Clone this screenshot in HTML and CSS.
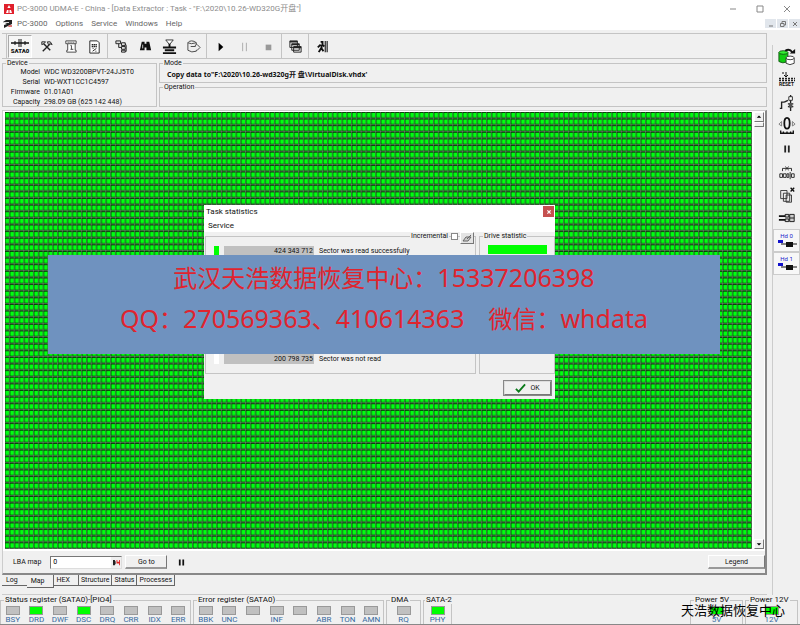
FILE: index.html
```html
<!DOCTYPE html>
<html lang="en">
<head>
<meta charset="utf-8">
<title>PC-3000 UDMA-E</title>
<link rel="stylesheet" href="styles.css">
</head>
<body>
<div class="window">
  <header class="titlebar">
    <svg class="app-icon" viewBox="0 0 10 10"><rect width="10" height="10" fill="#e0202c"/><path d="M5 1 3.400 4h3.200zM2 9l1-3h1.500v3zM8 9 7 6H5.500v3z" fill="#fff"/></svg>
    <h1>PC-3000 UDMA-E - China - [Data Extractor : Task - "F:\2020\10.26-WD320G开盘"]</h1>
    <div class="caption">
      <button aria-label="Minimize"><svg viewBox="0 0 8 8"><path d="M1 4h6"/></svg></button>
      <button aria-label="Maximize"><svg viewBox="0 0 8 8"><path d="M1 1h6v6H1z"/></svg></button>
      <button aria-label="Close"><svg viewBox="0 0 8 8"><path d="m1 1 6 6M7 1 1 7"/></svg></button>
    </div>
  </header>
  <nav class="menubar">
    <svg class="doc-icon" viewBox="0 0 10 10"><path d="M0 3 3 1h6v4L5 7 1 9V6l3-1z" fill="#222"/><path d="M1 3h5v1H1z" fill="#ddd"/><path d="M6 6h3v2H5z" fill="#d77"/></svg>
    <button>PC-3000</button><button>Options</button><button>Service</button><button>Windows</button><button>Help</button>
    <div class="mdi">
      <button aria-label="Minimize document"><svg viewBox="0 0 8 8"><path d="M2 6h4"/></svg></button>
      <button aria-label="Restore document"><svg viewBox="0 0 8 8"><path d="M3 3V1.500h3.500V5H5M1.500 3.500H5v3H1.500z"/></svg></button>
      <button aria-label="Close document"><svg viewBox="0 0 8 8"><path d="m2 2 4 4M6 2 2 6"/></svg></button>
    </div>
  </nav>

  <div class="workspace">
    <main class="main">
      <div class="toolbar">
        <div class="group first">
          <button class="sata"><svg viewBox="0 0 18 8"><path d="M0 4h18" stroke="#111" stroke-width="1.500"/><path d="M4 2v4M14 2v4M8 0v8M10 0v8" stroke="#111"/></svg>SATA0</button>
          <button aria-label="Tools"><svg viewBox="0 0 16 16"><path d="m4 4 8 8M12 5l-8 8" stroke="#222" stroke-width="1.500"/><path d="M3 6V3h4L5 5zM9 3h3l2 3-2-1-2 1z" fill="#ddd" stroke="#222"/></svg></button>
          <button aria-label="Script"><svg viewBox="0 0 16 16"><path d="M3 2h11v3h-1v7h1v2H4v-2h1V5H3zM5 5h8M9 7v4M8 11h3M8 7h1" fill="#fff" stroke="#444"/><path d="M5 3.500h8" stroke="#333" stroke-dasharray="1"/></svg></button>
          <button aria-label="Report"><svg viewBox="0 0 16 16"><path d="M3 2h8l2 2v11H3z" fill="#fff" stroke="#222"/><path d="M5 6h6M5 8h6" stroke="#222" stroke-width="1.500" stroke-dasharray="1.500 .5"/><path d="m6 13 4-3M6 10h1M9 13h1" stroke="#222"/></svg></button>
        </div>
        <div class="group">
          <button aria-label="Structure tree"><svg viewBox="0 0 16 16"><path d="M2 2h5v3H2zM8 4h4v3H8zM8 8h4v3H8zM8 12h4v2H8zM5 5v4h3M12 5l1 2v6l-1 1" fill="#ddd" stroke="#222"/></svg></button>
          <button aria-label="Find"><svg viewBox="0 0 16 16"><path d="M4 3h3v2h2V3h3l2 9H9V9H7v3H2z" fill="#111"/><path d="M5 6v4" stroke="#ccc"/></svg></button>
          <button aria-label="Map builder"><svg viewBox="0 0 16 16"><path d="M4 1h8L8 6z" fill="#fff" stroke="#333"/><path d="M8 5v3M1 9h14M3 12h10M1 15h14" stroke="#111" stroke-width="2"/></svg></button>
          <button aria-label="Open"><svg viewBox="0 0 16 16"><path d="M2 12V4q1-2 4-2t5 2v2h1l3 3-3 3h-1v1q-5 2-9-1M2 4q3 2 9 0M5 8h5V6" fill="#eee" stroke="#444"/></svg></button>
        </div>
        <div class="group">
          <button aria-label="Start"><svg viewBox="0 0 16 16"><path d="m6 4 5 4.500L6 13z" fill="#000"/></svg></button>
          <button aria-label="Pause"><svg viewBox="0 0 16 16"><path d="M6 4v9M10 4v9" stroke="#aaa"/></svg></button>
          <button aria-label="Stop"><svg viewBox="0 0 16 16"><path d="M5 6h6v6H5z" fill="#999"/></svg></button>
        </div>
        <div class="group">
          <button aria-label="Windows"><svg viewBox="0 0 16 16"><path d="M2 2h8v7H2zM4 5h8v7H4zM6 8h8v6H6z" fill="#eee" stroke="#222"/><path d="M2 3h8M4 6h8M6 9h8" stroke="#222" stroke-width="1.500"/></svg></button>
        </div>
        <div class="group">
          <button aria-label="Exit"><svg viewBox="0 0 16 16"><path d="M6 3h2v3l2 2M7 6v4l2 3M7 9l-3 5M6 6 3 9" stroke="#111" stroke-width="2" fill="none"/><path d="M11 2v12M13 2v12" stroke="#444" stroke-width="1.500"/></svg></button>
        </div>
      </div>

      <div class="info">
        <fieldset class="device">
          <legend>Device</legend>
          <dl>
            <dt>Model</dt><dd>WDC WD3200BPVT-24JJ5T0</dd>
            <dt>Serial</dt><dd>WD-WXT1CC1C4597</dd>
            <dt>Firmware</dt><dd>01.01A01</dd>
            <dt>Capacity</dt><dd>298.09 GB (625 142 448)</dd>
          </dl>
        </fieldset>
        <div class="modes">
          <fieldset><legend>Mode</legend><p>Copy data to"F:\2020\10.26-wd320g开 盘\VirtualDisk.vhdx'</p></fieldset>
          <fieldset><legend>Operation</legend></fieldset>
        </div>
      </div>

      <section class="map-panel">
        <div class="map-row">
          <svg class="map" viewBox="0 0 1860 1056" preserveAspectRatio="none">
            <defs><pattern id="cell" width="12" height="16" patternUnits="userSpaceOnUse">
              <rect width="12" height="16" fill="#9aa09a"/><rect width="11" height="15" fill="#033003"/><rect x="1" y="2" width="9" height="11" fill="#0f1"/>
            </pattern></defs>
            <rect width="1860" height="1056" fill="url(#cell)"/>
          </svg>
          <div class="scrollbar">
            <button aria-label="Scroll up"><svg viewBox="0 0 8 8"><path d="m1 5 3-3 3 3z"/></svg></button>
            <span class="thumb"></span>
            <button class="down" aria-label="Scroll down"><svg viewBox="0 0 8 8"><path d="m1 3 3 3 3-3z"/></svg></button>
          </div>
        </div>
        <div class="map-tools">
          <label for="lba">LBA map</label>
          <div class="lba"><input id="lba" value="0"><button aria-label="Number base"><svg viewBox="0 0 8 8"><path d="M0 1h2l1 2v2L2 7H0z" fill="#222"/><path d="M4 1h1v2h2V1h1v6H7V5H4z" fill="#d22"/></svg></button></div>
          <button class="raised goto">Go to</button>
          <button class="pause" aria-label="Pause map"><svg viewBox="0 0 8 8"><path d="M2 1v7M6 1v7" stroke="#111" stroke-width="2"/></svg></button>
          <button class="raised legend-btn">Legend</button>
        </div>
      </section>
      <nav class="tabs">
        <button>Log</button><button class="active">Map</button><button>HEX</button><button>Structure</button><button>Status</button><button>Processes</button>
      </nav>
    </main>

    <aside class="side">
      <button aria-label="Drive power"><svg viewBox="0 0 20 20"><path d="M1 5v10q4 3 10 0V5" fill="#1c1" stroke="#151"/><ellipse cx="6" cy="5" rx="5" ry="2" fill="#3e3" stroke="#151"/><path d="M9 11v6q4 3 9 0v-6" fill="#fff" stroke="#333"/><ellipse cx="13.500" cy="11" rx="4.500" ry="2" fill="#fff" stroke="#333"/><path d="M8 3q5-3 8 2" fill="none" stroke="#111" stroke-width="2"/><path d="M13 6h6V1z" fill="#111"/></svg></button>
      <button class="reset"><svg viewBox="0 0 18 10"><path d="M5 0v2M8 0v4M6 3l2 2 2-2" stroke="#111" fill="none"/><path d="M1 6.500h16M1 8.500h16" stroke="#222" stroke-width="1.500" stroke-dasharray="2 1"/></svg>RESET</button>
      <button aria-label="Probe"><svg viewBox="0 0 20 20"><path d="M2 16h2V9h3M7 9l4-2M14 1v18M11 11h6M11 14h6" stroke="#222" fill="none" stroke-width="1.500"/><path d="M12 3h4v4h-4z" fill="#fff" stroke="#222"/><path d="M12 10h4v5h-4z" fill="#555"/></svg></button>
      <button aria-label="Recalibrate"><svg viewBox="0 0 20 20"><ellipse cx="10" cy="7" rx="3" ry="6" fill="none" stroke="#111" stroke-width="2"/><path d="M4 5 1 8l3 2zM16 5l3 3-3 2z" fill="none" stroke="#777"/><path d="M3 15v3h14v-3M6 16v2M10 16v2M14 16v2" fill="none" stroke="#111" stroke-width="1.500"/></svg></button>
      <button aria-label="Pause drive"><svg viewBox="0 0 20 20"><path d="M8 6v8M12 6v8" stroke="#222" stroke-width="2"/></svg></button>
      <button aria-label="Sector mode"><svg viewBox="0 0 20 20"><path d="M2 12h3v4H2zM6 12h3v4H6zM10 12h2v4h-2zM15 12h3v4h-3zM13.500 10v8M5 9V6h10v3M8 4l4 4M12 4 8 8" fill="none" stroke="#222"/></svg></button>
      <button aria-label="Copy"><svg viewBox="0 0 20 20"><path d="M3 5h7v9H3zM6 8h7v9H6zM9 10h6v8H9z" fill="#eee" stroke="#333"/><path d="m14 2 4 4M18 2l-4 4" stroke="#111" stroke-width="1.500"/></svg></button>
      <button aria-label="Connector"><svg viewBox="0 0 20 20"><path d="M1 8h10M1 12h10" stroke="#111" stroke-width="2"/><path d="M8 6h4v3H8zM8 11h4v3H8zM13 6h5v8h-5zM13 10h5" fill="#ccc" stroke="#111"/></svg></button>
      <button class="hd">Hd 0<svg viewBox="0 0 20 10"><path d="M1 1h5v3H1z" fill="#11c"/><path d="M4 5h16" stroke="#111"/><path d="M9 3h7v5H9z" fill="#111"/></svg></button>
      <button class="hd">Hd 1<svg viewBox="0 0 20 10"><path d="M1 1h5v3H1z" fill="#11c"/><path d="M4 5h16" stroke="#111"/><path d="M9 3h7v5H9z" fill="#111"/></svg></button>
    </aside>
  </div>

  <footer class="status">
    <fieldset><legend>Status register (SATA0)-[PIO4]</legend>
      <ul><li>BSY</li><li class="on">DRD</li><li>DWF</li><li class="on">DSC</li><li>DRQ</li><li>CRR</li><li>IDX</li><li>ERR</li></ul></fieldset>
    <fieldset><legend>Error register (SATA0)</legend>
      <ul><li>BBK</li><li>UNC</li><li></li><li>INF</li><li></li><li>ABR</li><li>TON</li><li>AMN</li></ul></fieldset>
    <fieldset class="dma"><legend>DMA</legend><ul><li>RQ</li></ul></fieldset>
    <fieldset class="phy"><legend>SATA-2</legend><ul><li class="on">PHY</li></ul></fieldset>
    <fieldset class="power"><legend>Power 5V</legend><ul><li class="on">5V</li></ul></fieldset>
    <fieldset class="power last"><legend>Power 12V</legend><ul><li class="on">12V</li></ul></fieldset>
  </footer>

  <section class="dialog" role="dialog" aria-label="Task statistics">
    <header><h2>Task statistics</h2><button class="close" aria-label="Close dialog"><svg viewBox="0 0 10 10"><path d="m3 3 4 4M7 3 3 7" stroke="#fff" stroke-width="1.500"/></svg></button></header>
    <div class="dialog-menu"><button>Service</button></div>
    <div class="stats">
      <div class="box sectors">
        <div class="incremental"><label for="inc">Incremental</label><input type="checkbox" id="inc"><button aria-label="Clear"><svg viewBox="0 0 12 10"><path d="m2 8 3-4h5L7 8zM6 6l4-4" fill="#ccc" stroke="#666"/></svg></button></div>
        <div class="stat good"><i></i><b>424 343 712</b><span>Sector was read successfully</span></div>
        <div class="stat unread"><i></i><b>200 798 735</b><span>Sector was not read</span></div>
      </div>
      <fieldset class="drive"><legend>Drive statistic</legend><div class="bar"></div></fieldset>
    </div>
    <footer><button class="ok"><svg viewBox="0 0 12 10"><path d="m1 6 3 3 7-8" fill="none" stroke="#0a7a1a" stroke-width="2"/></svg>OK</button></footer>
  </section>

  <div class="banner">
    <p>武汉天浩数据恢复中心：<span>15337206398</span></p>
    <p><span>QQ</span>：<span>270569363</span>、<span>410614363</span><span class="gap"></span>微信：<span>whdata</span></p>
  </div>
  <div class="watermark">天浩数据恢复中心</div>
</div>
</body>
</html>
```
FILE: styles.css
```css
* { box-sizing: border-box; }
body {
  margin: 0;
  background: #f0f0f0;
  color: #111;
  font: 7px/8px Roboto, "Noto Sans CJK SC", sans-serif;
}
button {
  display: flex;
  align-items: center;
  justify-content: center;
  margin: 0;
  padding: 0;
  border: 0;
  background: none;
  color: inherit;
  font: inherit;
}
svg { display: block; }
h1, h2, p, ul, dl, dd { margin: 0; padding: 0; font-weight: normal; }
fieldset {
  min-width: 0;
  margin: 0;
  padding: 0;
  border: 1px solid #c4c4c4;
}
legend { margin-left: 3px; padding: 0 1px; line-height: 8px; }

.window {
  position: relative;
  display: flex;
  flex-direction: column;
  min-height: 100vh;
  overflow: hidden;
}

/* Title and menu */
.titlebar, .menubar {
  display: flex;
  align-items: center;
  background: #fff;
  color: #666;
}
.titlebar { height: 17px; padding-left: 4px; color: #8c8c8c; }
.titlebar h1 { margin-left: 3px; font-size: 8px; line-height: 16px; white-space: nowrap; }
.app-icon, .doc-icon { width: 10px; height: 10px; }
.caption { display: flex; margin-left: auto; }
.caption button { width: 27px; height: 16px; }
.caption svg { width: 8px; height: 8px; fill: none; stroke: #888; }
.menubar { height: 13px; padding-left: 3px; }
.menubar > button { margin: 0 4px; font-size: 8px; line-height: 12px; }
.mdi { display: flex; margin-left: auto; gap: 1px; }
.mdi button { width: 11px; height: 9px; background: #e1e6ec; }
.mdi svg { width: 8px; height: 8px; fill: none; stroke: #777; }

.workspace { display: flex; flex: 1; }
.main { display: flex; flex: 1; flex-direction: column; min-width: 0; padding: 3px 5px 0 2px; }

/* Toolbar */
.toolbar {
  display: flex;
  height: 26px;
  border: 1px solid #c4c4c4;
  border-left: 0;
}
.group { display: flex; align-items: center; padding: 0 1px; border-right: 1px solid #c4c4c4; }
.group:last-child { border-right: 0; }
.group.first { margin-left: 4px; border-left: 1px solid #c4c4c4; }
.group button { width: 24px; height: 23px; }
.group svg { width: 15px; height: 15px; }
.group .sata {
  flex-direction: column;
  margin-right: 2px;
  border: 1px solid #aaa;
  border-right-color: #fff;
  border-bottom-color: #fff;
  background: #f6f6f6;
  font-size: 6px;
  font-weight: 900;
  line-height: 7px;
}
.group .sata svg { width: 18px; height: 8px; }

/* Device and mode */
.info { display: flex; gap: 2px; height: 48px; }
.device { width: 155px; }
.device dl { display: grid; grid-template-columns: 37px 1fr; column-gap: 4px; line-height: 10px; white-space: nowrap; }
.device dt { text-align: right; }
.modes { display: grid; flex: 1; grid-template-rows: 24px 24px; }
.modes p { padding-left: 7px; font-family: "Noto Sans", "Noto Sans CJK SC", sans-serif; font-weight: bold; line-height: 16px; }

/* Sector map */
.map-panel {
  display: flex;
  flex: 1;
  flex-direction: column;
  margin-top: 3px;
  border: 1px solid #ccc;
  border-right: 2px solid #888;
  border-bottom: 2px solid #888;
}
.map-row { display: flex; flex: 1; min-height: 0; gap: 2px; padding: 1px 1px 2px 2px; background: #fff; }
.map { flex: 1; width: 0; height: 437px; }
.scrollbar { display: flex; flex-direction: column; width: 10px; background: #f4f4f4; }
.scrollbar button, .thumb {
  width: 10px;
  height: 10px;
  border: 1px solid #fff;
  border-right-color: #777;
  border-bottom-color: #777;
  background: #f0f0f0;
}
.thumb { height: 5px; }
.scrollbar .down { margin-top: auto; }
.scrollbar svg { width: 6px; height: 6px; }
.map-tools { display: flex; align-items: center; height: 22px; padding-left: 10px; }
.lba {
  display: flex;
  width: 72px;
  height: 13px;
  margin: 0 3px 0 9px;
  border: 1px solid #777;
  border-right-color: #ddd;
  border-bottom-color: #ddd;
  background: #fff;
}
.lba input { flex: 1; width: 0; padding: 0 2px; border: 0; background: none; font: inherit; }
.lba button { width: 10px; background: #f0f0f0; }
.lba svg { width: 7px; height: 7px; }
.raised {
  height: 14px;
  border: 1px solid #fff;
  border-right-color: #777;
  border-bottom: 2px solid #999;
}
.goto { width: 42px; }
.pause { width: 28px; }
.pause svg { width: 7px; height: 8px; }
.legend-btn { width: 57px; margin-left: auto; }

.tabs { display: flex; height: 20px; padding-bottom: 7px; border-bottom: 1px solid #ccc; }
.tabs button {
  height: 11px;
  padding: 0 2px;
  border-right: 1px solid #666;
  border-bottom: 1px solid #666;
}
.tabs button:first-child { padding: 0 9px 0 4px; border-right: 0; }
.tabs .active { height: 13px; padding: 0 8px 0 4px; }
.tabs button:nth-child(3) { padding: 0 8px 0 3px; }

/* Side tools */
.side {
  width: 28px;
  margin-top: 15px;
  border-left: 1px solid #ccc;
}
.side button { width: 27px; height: 23px; }
.side svg { width: 18px; height: 18px; }
.side .reset { flex-direction: column; font-size: 5px; font-weight: bold; line-height: 5px; }
.side .reset svg { height: 10px; }
.side .hd {
  flex-direction: column;
  border: 1px solid #ccc;
  background: #f7f7f7;
  color: #22c;
  font-size: 6px;
  line-height: 7px;
}
.side .hd svg { width: 20px; height: 10px; }

/* Registers */
.status {
  display: flex;
  gap: 2px;
  height: 30px;
  padding: 1px 2px 0 0;
  border-bottom: 1px solid #888;
  font-size: 8px;
}
.status fieldset { width: 191px; border-bottom: 0; }
.status legend { white-space: nowrap; }
.status ul { display: flex; list-style: none; }
.status li { display: flex; flex: 1; flex-direction: column; align-items: center; color: #36699f; line-height: 9px; }
.status li::before {
  width: 12px;
  height: 7px;
  margin-top: 2px;
  border: 1px solid #999;
  background: #c0c0c0;
  content: "";
}
.status .on::before { background: #0f0; }
.status .dma { width: 35px; }
.status .phy { width: 29px; }
.status .phy legend { margin-left: 1px; }
.status .power { width: 53px; margin-left: auto; }
.status .last { margin-left: 0; }

/* Statistics dialog */
.dialog {
  position: absolute;
  top: 205px;
  left: 204px;
  display: flex;
  flex-direction: column;
  width: 351px;
  height: 194px;
  background: #f0f0f0;
}
.dialog header, .dialog-menu { background: #fff; font-size: 8px; }
.dialog header { display: flex; justify-content: space-between; height: 14px; }
.dialog h2 { padding-left: 2px; font-size: 8px; line-height: 14px; }
.close { width: 11px; height: 11px; margin: 1px; background: #c5504f; }
.close svg { width: 8px; height: 8px; }
.dialog-menu { height: 13px; padding-left: 4px; }
.dialog-menu button { height: 13px; }
.stats { display: flex; flex: 1; gap: 3px; padding-left: 1px; }
.box { display: flex; flex-direction: column; width: 271px; margin-top: 4px; border: 1px solid #c4c4c4; }
.incremental { display: flex; justify-content: flex-end; gap: 2px; height: 12px; margin-top: -5px; padding-right: 1px; }
.incremental label { padding: 0 1px; background: #f0f0f0; }
.incremental input { width: 7px; height: 7px; margin: 1px 0 0; border: 1px solid #888; background: #fff; appearance: none; }
.incremental button { width: 14px; height: 12px; border: 1px solid #fff; border-right-color: #777; border-bottom-color: #777; background: #e4e4e4; }
.incremental svg { width: 12px; height: 10px; }
.stat { display: flex; gap: 5px; margin-top: 2px; padding-left: 8px; line-height: 10px; }
.stat i { width: 5px; height: 10px; background: #fff; }
.good i { background: #0f0; }
.stat b { width: 90px; padding-right: 1px; background: #c0c0c0; font-weight: normal; text-align: right; }
.unread { margin-top: auto; margin-bottom: 9px; }
.drive { flex: 1; }
.drive .bar { height: 9px; margin: 5px 7px 0 8px; background: #0f0; }
.dialog footer { display: flex; justify-content: flex-end; height: 25px; padding: 6px 3px 3px; }
.ok {
  width: 49px;
  gap: 4px;
  border: 2px solid #ddd;
  border-right-color: #777;
  border-bottom-color: #777;
  outline: 1px solid #888;
  outline-offset: -1px;
}
.ok svg { width: 11px; height: 10px; }

/* Contact overlay */
.banner {
  position: absolute;
  top: 255px;
  right: 80px;
  left: 48px;
  height: 99px;
  padding-top: 1px;
  background: #6f92bf;
  color: #e0242e;
  font: 24px/41px "Noto Sans CJK SC", sans-serif;
  text-align: center;
  white-space: nowrap;
}
.banner span { font-family: "Noto Sans", sans-serif; font-size: 25px; line-height: 24px; }
.banner .gap { display: inline-block; width: 24px; }
.watermark {
  position: absolute;
  right: 15px;
  bottom: 6px;
  color: #000;
  font: 13px/18px "Noto Sans CJK SC", sans-serif;
}
```
